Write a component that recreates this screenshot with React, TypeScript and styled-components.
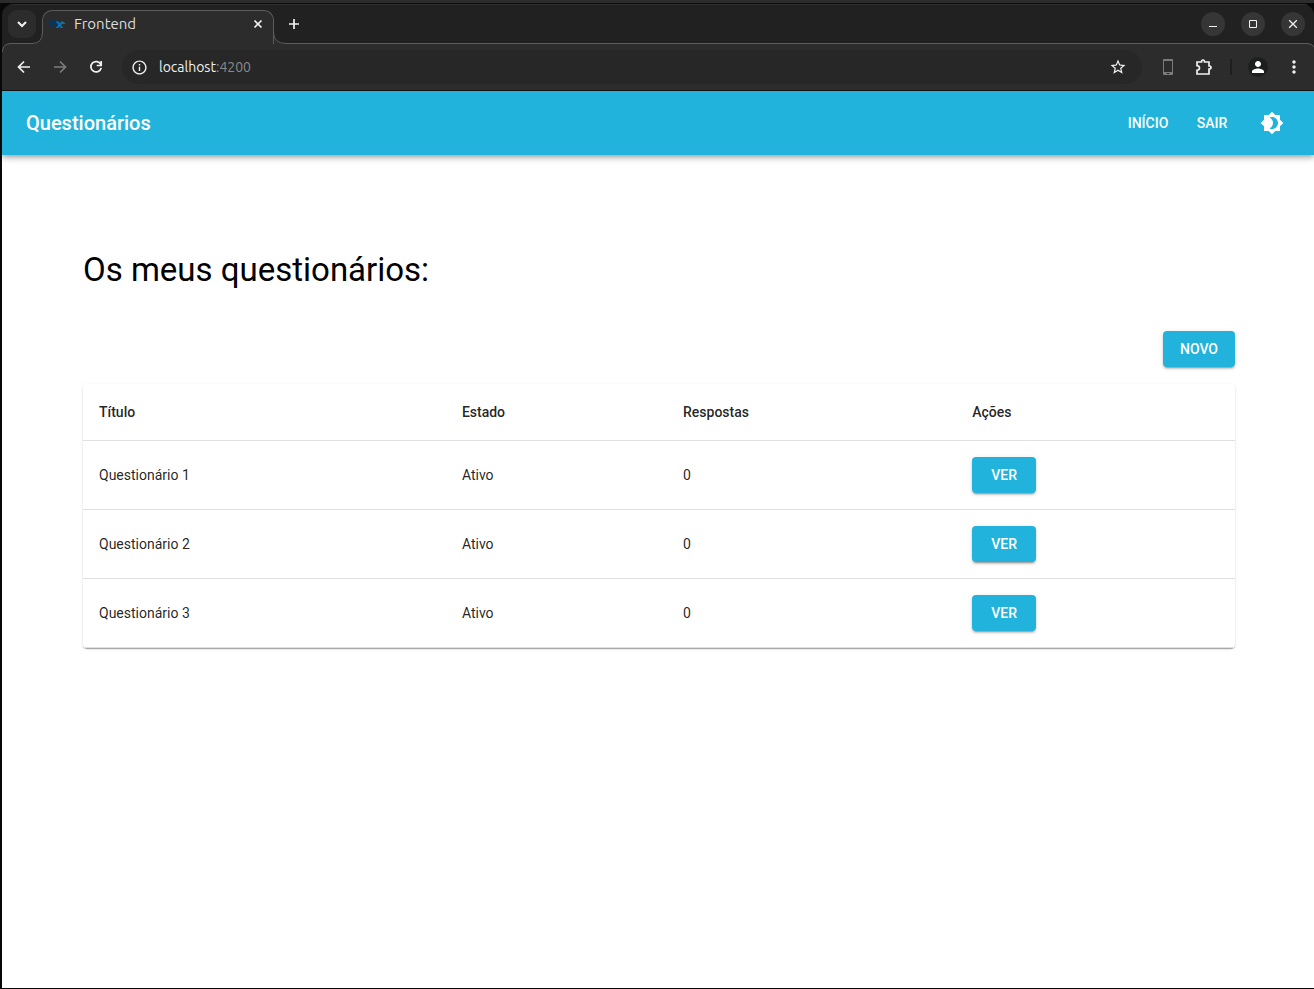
import React from "react";
import styled, { createGlobalStyle } from "styled-components";

const GlobalStyle = createGlobalStyle`
  * { box-sizing: border-box; }
  html, body, #root { height: 100%; }
  body { margin: 0; background: #2b2b2b; }
  button, input { font: inherit; }
`;

const accent = "#22b3dc";
const uiFont = `Ubuntu, "Noto Sans", sans-serif`;
const appFont = `Roboto, "Liberation Sans", sans-serif`;

const Desktop = styled.div`
  min-height: 100%;
  display: flex;
  flex-direction: column;
  padding: 3px 0 1px 2px;
  background: linear-gradient(#2c2c2c 0 3px, #080808 3px);
`;

const BrowserWindow = styled.div`
  flex: 1;
  display: flex;
  flex-direction: column;
  border-radius: 12px 12px 0 0;
  overflow: hidden;
  background: #212121;
  border-top: 1px solid #0c0c0c;
`;

const TabStrip = styled.div`
  display: flex;
  align-items: flex-end;
  height: 40px;
  font-family: ${uiFont};
  box-shadow: inset 0 1px #2e2e2e;
`;

const SearchSlot = styled.div`
  flex: 0 0 40px;
  height: 40px;
  position: relative;
  padding: 6px 0 0 6px;
`;

const SearchTabs = styled.button`
  width: 28px;
  height: 28px;
  display: grid;
  place-items: center;
  padding: 0;
  border: 0;
  border-radius: 9px;
  background: #2c2c2c;
  color: #f1f1f1;
`;

const TabCurve = styled.svg`
  position: absolute;
  left: 0;
  bottom: 0;
  display: block;
`;

const Tab = styled.div`
  flex: 0 0 232px;
  height: 34px;
  display: flex;
  align-items: center;
  gap: 8px;
  padding: 0 7px 7px 7px;
  background: #2c2c2c;
  border: 1px solid #5c5c5c;
  border-bottom: 0;
  border-radius: 10px 10px 0 0;
  color: #dedede;
  font-size: 15px;
  line-height: 20px;
`;

const TabTitle = styled.span`
  flex: 1;
`;

const GhostButton = styled.button<{ $size: number; $dim?: boolean }>`
  flex: none;
  width: ${(p) => p.$size}px;
  height: ${(p) => p.$size}px;
  display: grid;
  place-items: center;
  padding: 0;
  border: 0;
  border-radius: 50%;
  background: transparent;
  color: ${(p) => (p.$dim ? "#7c7c7c" : "#f1f1f1")};
`;

const StripRest = styled.div`
  flex: 1;
  height: 40px;
  position: relative;
  display: flex;
  align-items: center;
  justify-content: space-between;
  padding: 0 9px 0 8px;
  box-shadow: inset 0 1px #2e2e2e;
`;

const StripLine = styled.div`
  position: absolute;
  left: 11px;
  right: 0;
  bottom: 0;
  height: 1px;
  background: #5c5c5c;
`;

const WindowControls = styled.div`
  display: flex;
  gap: 16px;
`;

const WindowControl = styled(GhostButton)`
  background: #363636;
`;

const Toolbar = styled.div`
  position: relative;
  height: 47px;
  display: flex;
  align-items: center;
  gap: 8px;
  padding: 0 6px 0 8px;
  background: #2c2c2c;
  border-bottom: 1px solid #131313;
  font-family: ${uiFont};
  font-size: 14px;
`;

const ToolbarCorner = styled.svg<{ $side: "left" | "right" }>`
  position: absolute;
  top: -1px;
  ${(p) => p.$side}: 0;
  display: block;
`;

const AddressBar = styled.div`
  flex: 1;
  height: 34px;
  display: flex;
  align-items: center;
  padding: 0 10px 0 3px;
  margin-left: 4px;
  border-radius: 17px;
  background: #272727;
`;

const Address = styled.a`
  flex: 1;
  padding-left: 6px;
  color: #8a8a8a;
  text-decoration: none;
  line-height: 20px;
`;

const Host = styled.span`
  color: #efefef;
`;

const ToolbarActions = styled.div`
  display: flex;
  align-items: center;
  gap: 8px;
  margin-left: 4px;
`;

const ToolbarDivider = styled.div`
  width: 2px;
  height: 16px;
  margin: 0 4px;
  background: #1f1f1f;
`;

const Avatar = styled.span`
  width: 20px;
  height: 20px;
  display: grid;
  place-items: center;
  border-radius: 50%;
  background: #1d1f1f;
  color: #fff;
`;

const Page = styled.div`
  flex: 1;
  display: flex;
  flex-direction: column;
  background: #fff;
  font-family: ${appFont};
  color: #000;
`;

const AppBar = styled.header`
  height: 64px;
  display: flex;
  align-items: center;
  justify-content: space-between;
  padding: 0 22px 0 24px;
  background: ${accent};
  color: #fff;
  box-shadow: 0 2px 4px -1px rgba(0, 0, 0, 0.2), 0 4px 5px rgba(0, 0, 0, 0.14),
    0 1px 10px rgba(0, 0, 0, 0.12);
`;

const Brand = styled.div`
  font-size: 20px;
  font-weight: 500;
  line-height: 32px;
`;

const Nav = styled.nav`
  display: flex;
  align-items: center;
`;

const NavLink = styled.a`
  min-width: 64px;
  padding: 6px 8px;
  color: inherit;
  font-size: 14px;
  font-weight: 500;
  line-height: 24px;
  text-align: center;
  text-decoration: none;
  text-transform: uppercase;
`;

const ThemeButton = styled(GhostButton)`
  margin-left: 8px;
  color: #fff;
`;

const Main = styled.main`
  padding: 94px 79px 24px 81px;
`;

const Title = styled.h1`
  margin: 0;
  font-size: 33px;
  font-weight: 400;
  line-height: 42px;
`;

const TableToolbar = styled.div`
  display: flex;
  justify-content: flex-end;
  padding: 40px 0 17px;
`;

const Button = styled.button<{ $wide?: boolean }>`
  min-width: ${(p) => (p.$wide ? 72 : 64)}px;
  padding: 6px 16px;
  border: 0;
  border-radius: 4px;
  background: ${accent};
  color: #fff;
  font-size: 14px;
  font-weight: 500;
  line-height: 24px;
  text-transform: uppercase;
  box-shadow: 0 3px 1px -2px rgba(0, 0, 0, 0.2), 0 2px 2px rgba(0, 0, 0, 0.14),
    0 1px 5px rgba(0, 0, 0, 0.12);
`;

const Card = styled.div`
  border-radius: 4px;
  background: #fff;
  box-shadow: 0 2px 1px -1px rgba(0, 0, 0, 0.2), 0 1px 1px rgba(0, 0, 0, 0.14),
    0 1px 3px rgba(0, 0, 0, 0.12);
`;

const Table = styled.table`
  width: 100%;
  table-layout: fixed;
  border-collapse: separate;
  border-spacing: 0;
  font-size: 14px;
  line-height: 24px;
  color: rgba(0, 0, 0, 0.87);
`;

const HeadCell = styled.th<{ $share: number }>`
  width: ${(p) => p.$share}%;
  padding: 16px;
  border-bottom: 1px solid #e0e0e0;
  font-weight: 500;
  text-align: left;
`;

const Cell = styled.td`
  padding: 16px;
  border-bottom: 1px solid #e0e0e0;
  vertical-align: middle;
`;

const CellButton = styled(Button)`
  display: block;
`;

const columns = [
  { label: "Título", share: 31.5 },
  { label: "Estado", share: 19.2 },
  { label: "Respostas", share: 25.1 },
  { label: "Ações", share: 24.2 },
];

const surveys = [
  { title: "Questionário 1", state: "Ativo", answers: 0 },
  { title: "Questionário 2", state: "Ativo", answers: 0 },
  { title: "Questionário 3", state: "Ativo", answers: 0 },
];

type IconProps = { d: string; size?: number; width?: number };

const StrokeIcon = ({ d, size = 16, width = 1.7 }: IconProps) => (
  <svg width={size} height={size} viewBox={`0 0 ${size} ${size}`} fill="none" stroke="currentColor" strokeWidth={width} aria-hidden="true">
    <path d={d} />
  </svg>
);

const FillIcon = ({ d, size = 20 }: IconProps) => (
  <svg width={size} height={size} viewBox="0 0 24 24" fill="currentColor" aria-hidden="true">
    <path d={d} />
  </svg>
);

const Favicon = () => (
  <svg width="16" height="16" viewBox="0 0 16 16" aria-hidden="true">
    <path d="M0 3h2.600l3.400 5V3h2v3.500l-1.500 3 1.500 2.500H5.800L2.200 7.200V12H0z" fill="#08365f" />
    <path d="M5.500 5.500h3l1.300 1.700 1.700-1.900 2 .5 2 2-1.700.4-1.600-.5-1.100 1.300 2.200 3h-2.400L9.600 10.400 8.200 12H5.800l2.600-3.200z" fill="#0b72ab" />
  </svg>
);

export default function App() {
  return (
    <Desktop>
      <GlobalStyle />
      <BrowserWindow>
        <TabStrip>
          <SearchSlot>
            <TabCurve width="41" height="12" viewBox="0 0 41 12" aria-hidden="true">
              <path d="M0 12V11.500H30Q40.500 11.500 40.500 0H41V12z" fill="#2c2c2c" />
              <path d="M0 11.500H30Q40.500 11.500 40.500 0" fill="none" stroke="#5c5c5c" />
            </TabCurve>
            <SearchTabs aria-label="Search tabs">
              <StrokeIcon width={2} d="M4 6l4 4 4-4" />
            </SearchTabs>
          </SearchSlot>
          <Tab>
            <Favicon />
            <TabTitle>Frontend</TabTitle>
            <GhostButton $size={16} aria-label="Close tab">
              <StrokeIcon d="M4.500 4.500l7 7M11.500 4.500l-7 7" />
            </GhostButton>
          </Tab>
          <StripRest>
            <TabCurve width="12" height="12" viewBox="0 0 12 12" aria-hidden="true">
              <path d="M0 0Q0 11.500 12 11.500V12H0z" fill="#2c2c2c" />
              <path d="M-.5 0Q-.5 11.500 12 11.500" fill="none" stroke="#5c5c5c" />
            </TabCurve>
            <StripLine />
            <GhostButton $size={24} aria-label="New tab">
              <StrokeIcon d="M8 3v10M3 8h10" />
            </GhostButton>
            <WindowControls>
              <WindowControl $size={24} aria-label="Minimize">
                <StrokeIcon width={1} d="M4 10.500h8" />
              </WindowControl>
              <WindowControl $size={24} aria-label="Maximize">
                <StrokeIcon width={1} d="M4.500 4.500h7v7h-7z" />
              </WindowControl>
              <WindowControl $size={24} aria-label="Close">
                <StrokeIcon width={1.3} d="M4.200 4.200l7.600 7.600M11.800 4.200l-7.600 7.600" />
              </WindowControl>
            </WindowControls>
          </StripRest>
        </TabStrip>
        <Toolbar>
          <ToolbarCorner $side="left" width="9" height="9" viewBox="0 0 9 9" aria-hidden="true">
            <path d="M0 0H9V.5Q.5 .5 .5 9H0z" fill="#212121" />
            <path d="M9 .5Q.5 .5 .5 9" fill="none" stroke="#5c5c5c" />
          </ToolbarCorner>
          <ToolbarCorner $side="right" width="7" height="7" viewBox="0 0 7 7" aria-hidden="true">
            <path d="M0 0H7V4Q5 .5 0 .5z" fill="#212121" />
            <path d="M0 .5Q5 .5 7 4" fill="none" stroke="#5c5c5c" />
          </ToolbarCorner>
          <GhostButton $size={28} aria-label="Back">
            <StrokeIcon d="M14 8H3M8 2.500L2.500 8 8 13.500" />
          </GhostButton>
          <GhostButton $size={28} $dim aria-label="Forward">
            <StrokeIcon d="M2 8h11M8 2.500L13.500 8 8 13.500" />
          </GhostButton>
          <GhostButton $size={28} aria-label="Reload">
            <StrokeIcon d="M12.800 5.500A5.200 5.200 0 1 0 13.200 8.800M13.200 2v4.500H8.700" />
          </GhostButton>
          <AddressBar>
            <GhostButton $size={28} aria-label="Site information">
              <FillIcon size={17} d="M11 7h2v2h-2zm0 4h2v6h-2zm1-9C6.480 2 2 6.480 2 12s4.480 10 10 10 10-4.480 10-10S17.520 2 12 2zm0 18c-4.410 0-8-3.590-8-8s3.590-8 8-8 8 3.590 8 8-3.590 8-8 8z" />
            </GhostButton>
            <Address href="#">
              <Host>localhost</Host>:4200
            </Address>
            <GhostButton $size={28} aria-label="Bookmark this tab">
              <FillIcon size={18} d="M22 9.240l-7.190-.62L12 2 9.190 8.630 2 9.240l5.460 4.730L5.820 21 12 17.270 18.180 21l-1.630-7.030L22 9.240zM12 15.400l-3.760 2.270 1-4.280-3.320-2.880 4.380-.38L12 6.100l1.710 4.040 4.380.38-3.320 2.880 1 4.280L12 15.400z" />
            </GhostButton>
          </AddressBar>
          <ToolbarActions>
            <GhostButton $size={28} $dim aria-label="Device view">
              <StrokeIcon width={1} d="M3.500 .5h9v15h-9zM3.500 1.500h9M3.500 13.500h9M3.500 14.500h3M9.500 14.500h3" />
            </GhostButton>
            <GhostButton $size={28} aria-label="Extensions">
              <StrokeIcon size={18} d="M2 4H6.500Q6.500 2 8 2T9.500 4H14V8Q16 8 16 9.500T14 11V16H2V12.300Q4.500 12.300 4.500 10T2 7.700z" width={1.7} />
            </GhostButton>
            <ToolbarDivider />
            <GhostButton $size={28} aria-label="Profile">
              <Avatar>
                <FillIcon size={18} d="M12 12c2.210 0 4-1.790 4-4s-1.790-4-4-4-4 1.790-4 4 1.790 4 4 4zm0 2c-2.670 0-8 1.340-8 4v2h16v-2c0-2.660-5.330-4-8-4z" />
              </Avatar>
            </GhostButton>
            <GhostButton $size={28} aria-label="Menu">
              <FillIcon size={20} d="M12 8c1.100 0 2-.9 2-2s-.9-2-2-2-2 .9-2 2 .9 2 2 2zm0 2c-1.100 0-2 .9-2 2s.9 2 2 2 2-.9 2-2-.9-2-2-2zm0 6c-1.100 0-2 .9-2 2s.9 2 2 2 2-.9 2-2-.9-2-2-2z" />
            </GhostButton>
          </ToolbarActions>
        </Toolbar>
        <Page>
          <AppBar>
            <Brand>Questionários</Brand>
            <Nav>
              <NavLink href="#">Início</NavLink>
              <NavLink href="#">Sair</NavLink>
              <ThemeButton $size={40} aria-label="Mudar tema">
                <FillIcon size={24} d="M20 8.690V4h-4.690L12 .69 8.690 4H4v4.690L.69 12 4 15.310V20h4.690L12 23.310 15.310 20H20v-4.690L23.310 12 20 8.690zM12 18c-.89 0-1.740-.2-2.500-.55C11.560 16.500 13 14.420 13 12s-1.440-4.500-3.500-5.450C10.260 6.200 11.110 6 12 6c3.310 0 6 2.690 6 6s-2.690 6-6 6z" />
              </ThemeButton>
            </Nav>
          </AppBar>
          <Main>
            <Title>Os meus questionários:</Title>
            <TableToolbar>
              <Button $wide>Novo</Button>
            </TableToolbar>
            <Card>
              <Table>
                <thead>
                  <tr>
                    {columns.map((c) => (
                      <HeadCell key={c.label} $share={c.share} scope="col">
                        {c.label}
                      </HeadCell>
                    ))}
                  </tr>
                </thead>
                <tbody>
                  {surveys.map((s) => (
                    <tr key={s.title}>
                      <Cell>{s.title}</Cell>
                      <Cell>{s.state}</Cell>
                      <Cell>{s.answers}</Cell>
                      <Cell>
                        <CellButton>Ver</CellButton>
                      </Cell>
                    </tr>
                  ))}
                </tbody>
              </Table>
            </Card>
          </Main>
        </Page>
      </BrowserWindow>
    </Desktop>
  );
}
